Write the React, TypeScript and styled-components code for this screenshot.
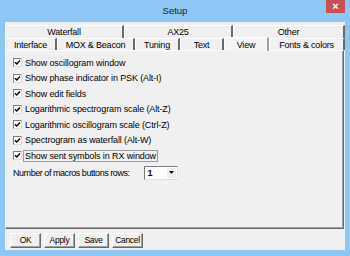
import React from 'react';
import styled, { createGlobalStyle } from 'styled-components';

const GlobalStyle = createGlobalStyle`
    html, body {
        margin: 0;
        padding: 0;
        background: #8ec6f5;
    }
    body {
        font-family: "Liberation Sans", Arial, sans-serif;
        font-size: 9px;
        color: #000;
    }
`;

const backTabs = [
    { label: 'Waterfall', width: 119 },
    { label: 'AX25', width: 109 },
    { label: 'Other', width: 112 },
];

const frontTabs = [
    { label: 'Interface', width: 52 },
    { label: 'MOX & Beacon', width: 78 },
    { label: 'Tuning', width: 45 },
    { label: 'Text', width: 44 },
    { label: 'View', width: 45, active: true },
    { label: 'Fonts & colors', width: 76 },
];

const options = [
    'Show oscillogram window',
    'Show phase indicator in PSK (Alt-I)',
    'Show edit fields',
    'Logarithmic spectrogram scale (Alt-Z)',
    'Logarithmic oscillogram scale (Ctrl-Z)',
    'Spectrogram as waterfall (Alt-W)',
    'Show sent symbols in RX window',
];

function CheckMark() {
    return (
        <svg width="7" height="7" viewBox="0 0 7 7">
            <path d="M1 3.2 L2.8 5 L6 1.6" stroke="#000" strokeWidth="1.4" fill="none" />
        </svg>
    );
}

function App() {
    return (
        <>
            <GlobalStyle />
            <StyledWindow>
                <StyledTitleBar>
                    <span />
                    <div className="title">Setup</div>
                    <StyledClose>×</StyledClose>
                </StyledTitleBar>
                <StyledClient>
                    <StyledTabRow>
                        {backTabs.map((t) => (
                            <StyledTab key={t.label} $width={t.width}>
                                {t.label}
                            </StyledTab>
                        ))}
                    </StyledTabRow>
                    <StyledTabRow>
                        {frontTabs.map((t) => (
                            <StyledTab
                                key={t.label}
                                $width={t.width}
                                $active={t.active}
                            >
                                {t.label}
                            </StyledTab>
                        ))}
                    </StyledTabRow>
                    <StyledPanel>
                        {options.map((o, i) => (
                            <StyledOption key={o}>
                                <StyledCheckbox>
                                    <CheckMark />
                                </StyledCheckbox>
                                <StyledOptionLabel
                                    $focused={i === options.length - 1}
                                >
                                    {o}
                                </StyledOptionLabel>
                            </StyledOption>
                        ))}
                        <StyledMacroRow>
                            <span>Number of macros buttons rows:</span>
                            <StyledCombo>
                                <span className="value">1</span>
                                <span className="arrow">
                                    <svg width="5" height="5" viewBox="0 0 5 5">
                                        <path d="M0 1 H5 L2.5 4 Z" fill="#000" />
                                    </svg>
                                </span>
                            </StyledCombo>
                        </StyledMacroRow>
                    </StyledPanel>
                    <StyledFooter>
                        <StyledButton>OK</StyledButton>
                        <StyledButton>Apply</StyledButton>
                        <StyledButton>Save</StyledButton>
                        <StyledButton>Cancel</StyledButton>
                    </StyledFooter>
                </StyledClient>
            </StyledWindow>
        </>
    );
}

export default App;

const StyledWindow = styled.div`
    width: 350px;
    height: 256px;
    background: #8ec6f5;
    display: flex;
    flex-direction: column;
    box-sizing: border-box;
    overflow: hidden;
`;

const StyledTitleBar = styled.div`
    height: 22px;
    display: grid;
    grid-template-columns: 1fr auto 1fr;
    align-items: start;

    .title {
        padding-top: 5px;
        font-size: 9.5px;
        color: #222;
    }
`;

const StyledClose = styled.div`
    justify-self: end;
    margin-right: 5px;
    width: 19px;
    height: 13px;
    background: #c75050;
    color: #fff;
    font-size: 11px;
    line-height: 12px;
    text-align: center;
    font-weight: bold;
`;

const StyledClient = styled.div`
    flex: 1;
    margin: 0 5px 6px 5px;
    background: #f0f0f0;
    display: flex;
    flex-direction: column;
    padding-top: 3px;
`;

const StyledTabRow = styled.div`
    display: flex;
    height: 12px;
    align-items: flex-end;

    &:first-child {
        height: 13px;
    }
`;

const StyledTab = styled.div<{ $width: number; $active?: boolean }>`
    width: ${({ $width }) => $width}px;
    height: ${({ $active }) => ($active ? '14px' : '100%')};
    margin-bottom: ${({ $active }) => ($active ? '-1px' : '0')};
    box-sizing: border-box;
    border-top: 1px solid #fff;
    border-left: 1px solid #fff;
    border-right: 2px solid ${({ $active }) => ($active ? '#a0a0a0' : '#696969')};
    background: ${({ $active }) => ($active ? '#f5f5f5' : '#f0f0f0')};
    display: flex;
    align-items: center;
    justify-content: center;
    font-size: 9px;
    letter-spacing: -0.2px;
    white-space: nowrap;
    position: relative;
    z-index: ${({ $active }) => ($active ? 2 : 1)};
`;

const StyledPanel = styled.div`
    height: 179px;
    box-sizing: border-box;
    margin-right: 1px;
    border-top: 1px solid #fff;
    border-left: 1px solid #fff;
    border-right: 1px solid #696969;
    border-bottom: 1px solid #696969;
    box-shadow: inset -1px -1px 0 #a0a0a0;
    padding: 4px 0 0 7px;
    display: flex;
    flex-direction: column;
`;

const StyledOption = styled.div`
    height: 15.5px;
    display: flex;
    align-items: center;
    gap: 1px;
`;

const StyledCheckbox = styled.span`
    width: 9px;
    height: 9px;
    box-sizing: border-box;
    border: 1px solid #808080;
    border-right-color: #dcdcdc;
    border-bottom-color: #dcdcdc;
    background: #fff;
    display: flex;
    align-items: center;
    justify-content: center;
`;

const StyledOptionLabel = styled.span<{ $focused?: boolean }>`
    font-size: 9px;
    letter-spacing: -0.12px;
    padding: 0 1px;
    border: 1px solid ${({ $focused }) => ($focused ? '#9a9a9a' : 'transparent')};
    line-height: 10px;
`;

const StyledMacroRow = styled.div`
    margin-top: 2px;
    display: flex;
    align-items: center;
    gap: 14px;
    font-size: 9px;
    letter-spacing: -0.45px;
`;

const StyledCombo = styled.div`
    width: 34px;
    height: 14px;
    box-sizing: border-box;
    border: 1px solid #7a7a7a;
    border-right-color: #e0e0e0;
    border-bottom-color: #e0e0e0;
    background: #fff;
    display: flex;
    align-items: center;
    letter-spacing: 0;

    .value {
        flex: 1;
        padding-left: 3px;
        font-weight: bold;
        font-size: 9px;
    }
    .arrow {
        width: 9px;
        height: 10px;
        margin-right: 1px;
        background: #f0f0f0;
        display: flex;
        align-items: center;
        justify-content: center;
    }
`;

const StyledFooter = styled.div`
    flex: 1;
    display: flex;
    gap: 3px;
    padding: 4px 0 0 5px;
`;

const StyledButton = styled.button`
    all: unset;
    width: 31px;
    height: 15px;
    box-sizing: border-box;
    background: #f0f0f0;
    border: 1px solid #fff;
    border-right-color: #696969;
    border-bottom-color: #696969;
    box-shadow: inset -1px -1px 0 #a0a0a0;
    font-family: "Liberation Sans", Arial, sans-serif;
    font-size: 8.5px;
    letter-spacing: -0.3px;
    text-align: center;
    line-height: 13px;
    color: #000;
`;
